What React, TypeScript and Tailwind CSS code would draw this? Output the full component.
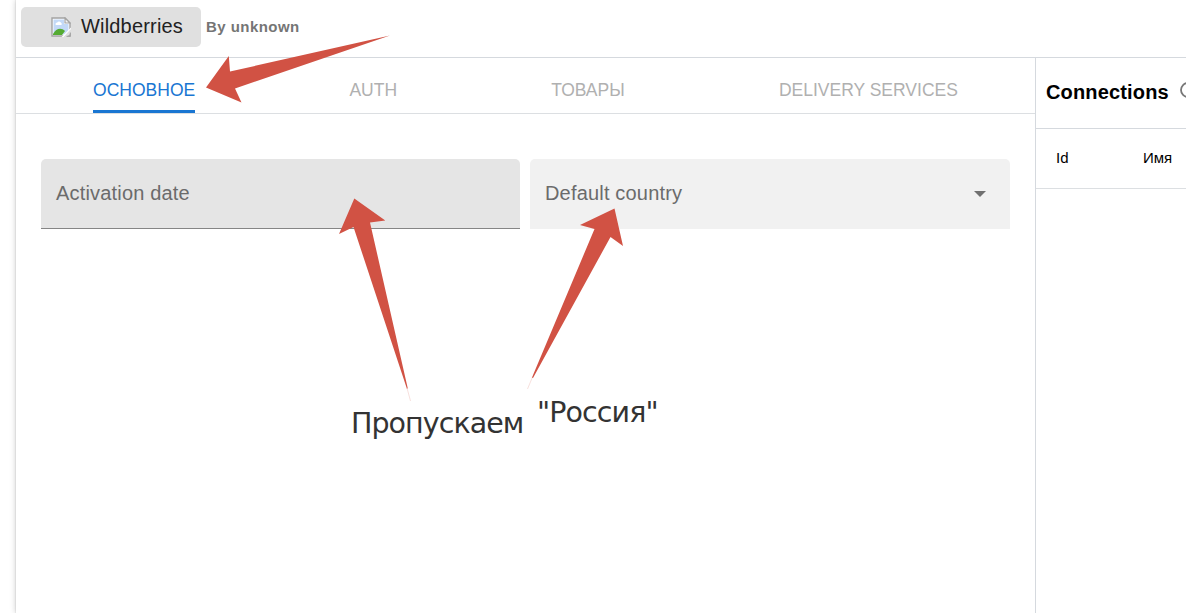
import { clsx } from 'clsx';

const tabs = ['ОСНОВНОЕ', 'AUTH', 'ТОВАРЫ', 'DELIVERY SERVICES'];

const BrokenImage = () => (
  <svg width="20" height="20" viewBox="0 0 20 20" className="block">
    <path d="M1 1H14L19 6V19H1Z" fill="#fff" stroke="#a3a3a3" strokeWidth="1.4" />
    <path d="M2.5 2.5H13V7H17.5V17.5H2.5Z" fill="#c3d9f7" />
    <path d="M4.5 7.5a1.8 1.8 0 0 1 1.8-2a2 2 0 0 1 3.7 .3a1.3 1.3 0 0 1 .3 2.2H5Z" fill="#fff" />
    <path d="M2 18V17C5 11.5 10 10 14 14L11 18Z" fill="#55ab33" />
    <path d="M14 1V6H19Z" fill="#f4f4f4" stroke="#a3a3a3" strokeWidth="1.2" />
    <path d="M20 10.5V12.5L13 20H10.5Z" fill="#fff" />
    <path d="M20 12V15.5L15.5 20H12.5Z" fill="#e0e0e0" />
    <path d="M19.3 15.5V19.3H15.5" fill="none" stroke="#a3a3a3" />
  </svg>
);

const Header = () => (
  <header className="flex h-[58px] items-start border-b border-[#d5d9de] pt-[7px] pl-[5px]">
    <button className="flex h-10 w-[180px] items-center rounded-[5px] bg-[#e0e0e0] pl-[30px] text-xl text-[#212121]">
      <BrokenImage />
      <span className="ml-2.5 -mt-0.5 tracking-[0.18px]">Wildberries</span>
    </button>
    <span className="ml-[5px] mt-[11px] text-[15px] leading-[18px] font-bold tracking-[0.45px] text-[#757575]">
      By unknown
    </span>
  </header>
);

const Tabs = () => (
  <nav className="flex h-14 justify-around border-b border-[#dcdfe2]">
    {tabs.map((tab, i) => (
      <button
        key={tab}
        className={clsx(
          'h-[55px] border-b-3 pt-[9px] text-[17.5px] leading-[46px]',
          i === 0 ? 'border-[#1976d2] text-[#1976d2]' : 'border-transparent text-[#b0b0b0]',
        )}
      >
        {tab}
      </button>
    ))}
  </nav>
);

const Fields = () => (
  <div className="flex gap-2.5 pt-[45px] pr-[25px] pl-[25px] text-xl tracking-[0.18px] text-[#6b6b6b]">
    <div className="h-[70px] w-[479px] rounded-t-[5px] border-b border-[#858585] bg-[#e5e5e5] pt-5 pl-[15px]">
      Activation date
    </div>
    <div className="flex h-[70px] w-[480px] justify-between rounded-t-[5px] bg-[#f1f1f1] pt-5 pr-6 pl-[15px]">
      Default country
      <svg width="12" height="6" viewBox="0 0 12 6" className="mt-3">
        <path d="M0 0H12L6 6Z" fill="#707070" />
      </svg>
    </div>
  </div>
);

const Connections = () => (
  <aside className="w-[151px] shrink-0 overflow-hidden border-l border-[#d5d9de] text-black">
    <div className="flex h-[71px] items-center border-b border-[#d5d9de] pl-2.5">
      <h2 className="-mt-[3px] w-[123px] shrink-0 text-xl font-bold tracking-[0.16px]">Connections</h2>
      <svg width="16" height="16" viewBox="0 0 16 16" className="-mt-[7px] ml-[11px] shrink-0">
        <circle cx="8" cy="8" r="7" fill="none" stroke="#777" strokeWidth="1.8" />
      </svg>
    </div>
    <div className="flex h-[60px] items-center border-b border-[#dcdfe2] pl-5 text-[15px]">
      <span className="w-[87px]">Id</span>
      <span>Имя</span>
    </div>
  </aside>
);

// Arrows and captions that lie over the form
const Annotations = () => (
  <div className="pointer-events-none absolute inset-0 font-['DejaVu_Sans',sans-serif] text-[#333]">
    <svg width="1186" height="613" viewBox="0 0 1186 613" className="absolute inset-0">
      <g fill="#d15244">
        <path d="M206 87.5L228.8 56L230 71.5L390 35.5L235 88.5L241.5 102.5Z" />
        <path d="M354.3 198.5L385.3 220.5L370 222.5L407.7 388L407 389L353.5 227L339 234Z" />
        <path d="M614.5 208.5L623 246L610.5 237L533 378L532 377.5L594.5 229L580 225Z" />
      </g>
      <path d="M407 388L410.5 401M532.5 377L527.5 389" stroke="#d15244" strokeOpacity="0.3" strokeWidth="0.6" />
    </svg>
    <span className="absolute top-[404px] left-[351px] text-[28.5px] leading-10 tracking-[-0.95px] whitespace-nowrap">
      Пропускаем
    </span>
    <span className="absolute top-[393px] left-[537px] text-[28.5px] leading-10 tracking-[-0.9px] whitespace-nowrap">
      "Россия"
    </span>
  </div>
);

const App = () => {
  return (
    <div className="relative h-[613px] w-[1186px] overflow-hidden bg-white pl-4 font-['Liberation_Sans',Arial,sans-serif]">
      <div className="flex h-full flex-col bg-white shadow-[0_0_6px_rgba(0,0,0,0.22),0_0_1px_rgba(0,0,0,0.25)]">
        <Header />
        <div className="flex grow">
          <main className="w-[1019px] shrink-0">
            <Tabs />
            <Fields />
          </main>
          <Connections />
        </div>
      </div>
      <Annotations />
    </div>
  );
};

export default App;
